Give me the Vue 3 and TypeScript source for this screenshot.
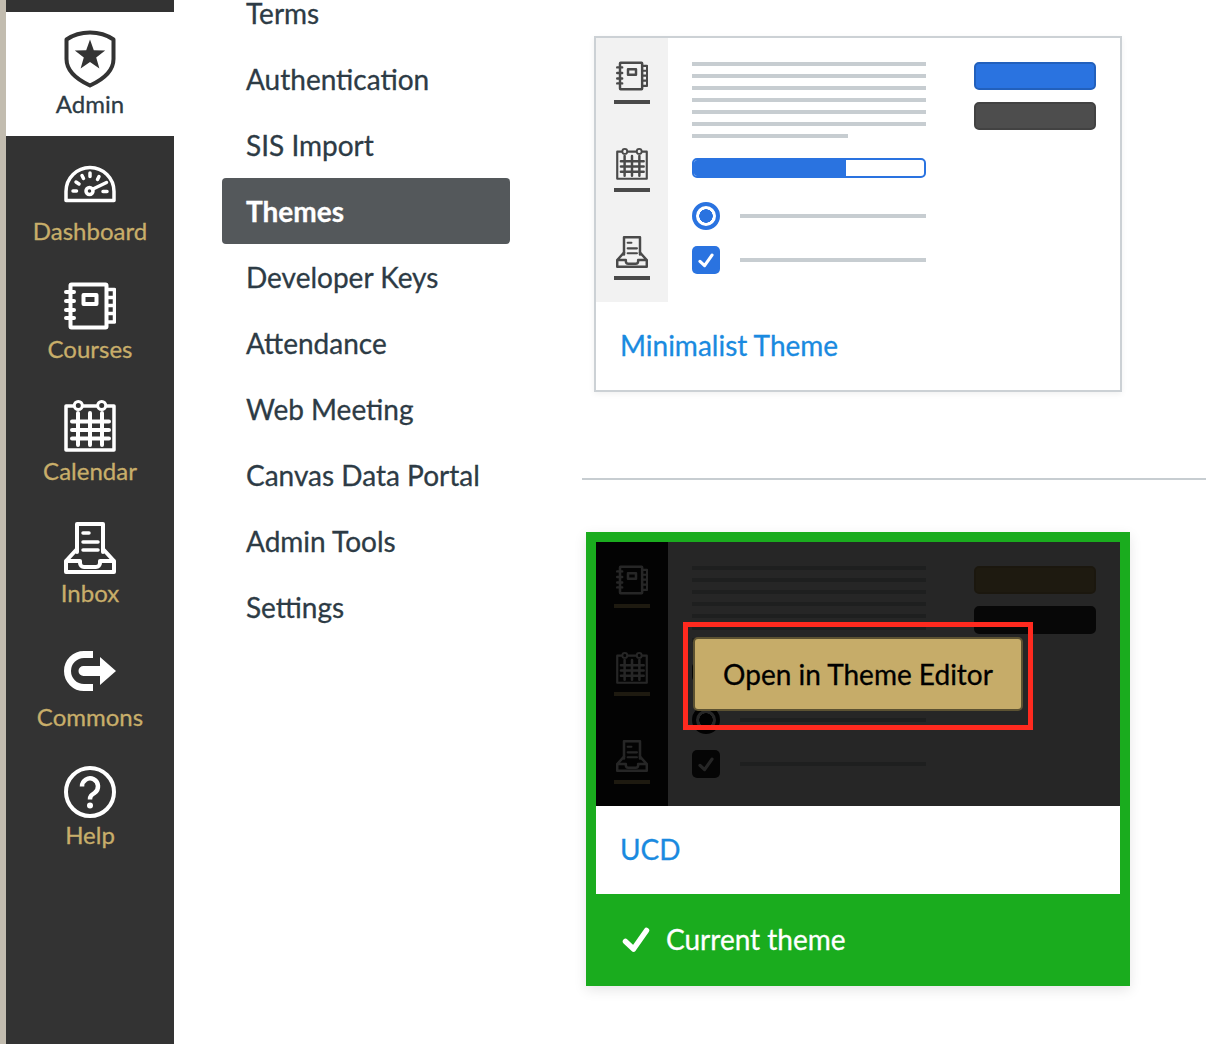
<script setup lang="ts">
interface NavItem {
  key: string
  label: string
}

interface Theme {
  name: string
  variant: 'minimal' | 'ucd'
  current: boolean
}

const navItems: NavItem[] = [
  { key: 'dashboard', label: 'Dashboard' },
  { key: 'courses', label: 'Courses' },
  { key: 'calendar', label: 'Calendar' },
  { key: 'inbox', label: 'Inbox' },
  { key: 'commons', label: 'Commons' },
  { key: 'help', label: 'Help' },
]

const menuItems = [
  'Terms',
  'Authentication',
  'SIS Import',
  'Themes',
  'Developer Keys',
  'Attendance',
  'Web Meeting',
  'Canvas Data Portal',
  'Admin Tools',
  'Settings',
]

const themes: Theme[] = [
  { name: 'Minimalist Theme', variant: 'minimal', current: false },
  { name: 'UCD', variant: 'ucd', current: true },
]

const previewIcons = ['courses', 'calendar', 'inbox']
</script>

<template>
  <svg class="sprite" aria-hidden="true">
    <defs>
      <symbol id="icon-dashboard" viewBox="0 0 52 52">
        <g fill="none" stroke="currentColor" stroke-linecap="round" stroke-linejoin="round">
          <path stroke-width="3.5" d="M2 41.5V32.5A24 24 0 0 1 50 32.5V41.5Z" />
          <circle cx="25.5" cy="32" r="3.5" stroke-width="3.5" />
          <path stroke-width="3.5" d="M29 30L42.5 23.5" />
          <path stroke-width="3.5" d="M9 32H12.5M39 32.500H43M12 23L15 25M18 16.5L19.500 19.500M26 14V17.500M35 17.500L33.500 20.500" />
        </g>
      </symbol>
      <symbol id="icon-courses" viewBox="0 0 52 52">
        <g fill="none" stroke="currentColor" stroke-linecap="round" stroke-linejoin="round">
          <rect x="6.5" y="4.5" width="36" height="43" rx="1" stroke-width="4" />
          <rect x="19.5" y="15" width="13" height="9" stroke-width="4" />
          <path stroke-width="4" d="M2 12H10M2 21H10M2 30H10M2 38H10" />
          <path stroke-width="3.5" d="M43 9.500H50.500V42H43M43 17.500H50.500M43 25.500H50.500M43 33.500H50.500" />
        </g>
      </symbol>
      <symbol id="icon-calendar" viewBox="0 0 52 52">
        <g fill="none" stroke="currentColor" stroke-linecap="round" stroke-linejoin="round">
          <path stroke-width="3.5" d="M9.500 6H2V50H50V6H42.500M19 6H33" />
          <circle cx="14.300" cy="5.500" r="4" stroke-width="3" />
          <circle cx="37.700" cy="5.500" r="4" stroke-width="3" />
          <path stroke-width="4" d="M8 21.500H45M8 30H45M8 38.500H45M14 13V45M26 13V45M38 13V45" />
        </g>
      </symbol>
      <symbol id="icon-inbox" viewBox="0 0 52 52">
        <g fill="none" stroke="currentColor" stroke-linecap="round" stroke-linejoin="round">
          <path stroke-width="4" d="M13 30V2H39V30" />
          <path stroke-width="3.500" d="M19 11H25M19 20H34M19 28H34" />
          <path stroke-width="4" d="M13 27L2 39V50H50V39L39 27M2 39H16V41A4 4 0 0 0 20 45H32A4 4 0 0 0 36 41V39H50" />
        </g>
      </symbol>
      <symbol id="icon-commons" viewBox="0 0 52 52">
        <path fill="none" stroke="currentColor" stroke-width="7" d="M29 9.500H20A16.500 16.500 0 0 0 20 42.500H29" />
        <path fill="currentColor" d="M36 12L52 26L36 40V31H19.500A5 5 0 0 1 19.500 21H36Z" />
      </symbol>
      <symbol id="icon-help" viewBox="0 0 52 52">
        <circle cx="26" cy="26" r="24" fill="none" stroke="currentColor" stroke-width="4" />
        <path fill="none" stroke="currentColor" stroke-width="4.500" d="M18 20.500A8 8 0 1 1 30.500 27C27.500 29 26 30 26 33.500" />
        <circle cx="26" cy="39.500" r="3" fill="currentColor" />
      </symbol>
      <symbol id="icon-check" viewBox="0 0 28 26">
        <path fill="none" stroke="currentColor" stroke-width="5.500" stroke-linecap="round" stroke-linejoin="round" d="M3.500 14.500L11.500 22L24.500 3.500" />
      </symbol>
    </defs>
  </svg>

  <div class="page">
    <div class="edge"></div>

    <nav class="nav">
      <a class="admin-item">
        <svg class="admin-icon" viewBox="0 0 52 58">
          <path fill="none" stroke="currentColor" stroke-width="4" stroke-linejoin="round" d="M2.500 9.500C9 5 17 2.500 26 2.500S43 5 49.500 9.500V29C49.500 41 38 50 26 55.500C14 50 2.500 41 2.500 29Z" />
          <polygon fill="currentColor" points="26,9.500 29.800,20.200 41.200,20.600 32.200,27.500 35.400,38.400 26,32 16.600,38.400 19.800,27.500 10.800,20.600 22.200,20.200" />
        </svg>
        <span class="admin-label">Admin</span>
      </a>
      <a v-for="item in navItems" :key="item.key" class="nav-item" :class="`nav-${item.key}`">
        <svg class="nav-icon"><use :href="`#icon-${item.key}`" /></svg>
        <span class="nav-label">{{ item.label }}</span>
      </a>
    </nav>

    <ul class="menu">
      <li v-for="item in menuItems" :key="item" class="menu-item" :class="{ active: item === 'Themes' }">
        {{ item }}
      </li>
    </ul>

    <main class="content">
      <template v-for="(theme, index) in themes" :key="theme.name">
        <hr v-if="index > 0" class="divider" />
        <section class="card" :class="[`card-${theme.variant}`, { current: theme.current }]">
          <div class="preview">
            <div class="preview-side">
              <div v-for="icon in previewIcons" :key="icon" class="preview-link">
                <svg class="preview-icon"><use :href="`#icon-${icon}`" /></svg>
                <span class="preview-bar"></span>
              </div>
            </div>
            <div class="preview-main">
              <div class="preview-body">
                <div class="text-lines">
                  <span v-for="n in 7" :key="n" class="line" :class="{ short: n === 7 }"></span>
                </div>
                <div class="progress"><span class="progress-fill"></span></div>
                <div class="option">
                  <span class="radio"></span>
                  <span class="line"></span>
                </div>
                <div class="option">
                  <span class="checkbox">
                    <svg viewBox="0 0 28 26"><use href="#icon-check" /></svg>
                  </span>
                  <span class="line"></span>
                </div>
              </div>
              <div class="preview-buttons">
                <span class="fake-btn primary"></span>
                <span class="fake-btn secondary"></span>
              </div>
            </div>
            <div v-if="theme.current" class="overlay">
              <div class="open-wrap">
                <button class="open-btn" type="button">Open in Theme Editor</button>
                <span class="highlight"></span>
              </div>
            </div>
          </div>
          <div class="caption">{{ theme.name }}</div>
          <div v-if="theme.current" class="current-row">
            <svg class="current-check" viewBox="0 0 28 26"><use href="#icon-check" /></svg>
            <span class="current-text">Current theme</span>
          </div>
        </section>
      </template>
    </main>
  </div>
</template>

<style>
html,
body {
  margin: 0;
  background: #fff;
  overflow: hidden;
}
</style>

<style scoped>
.sprite {
  position: absolute;
  width: 0;
  height: 0;
}

.page {
  display: flex;
  width: 1206px;
  height: 1044px;
  overflow: hidden;
  font-family: Lato, "Open Sans", sans-serif;
  -webkit-text-stroke: 0.3px currentColor;
  background: #fff;
}

.edge {
  flex: 0 0 6px;
  background: #c2bcaf;
}

.nav {
  flex: 0 0 168px;
  display: flex;
  flex-direction: column;
  align-items: stretch;
  padding-top: 12px;
  box-sizing: border-box;
  background: #333;
}

.admin-item {
  height: 124px;
  box-sizing: border-box;
  padding-top: 18px;
  display: flex;
  flex-direction: column;
  align-items: center;
  background: #fff;
  color: #333;
}

.admin-icon {
  width: 52px;
  height: 58px;
}

.admin-label {
  margin-top: 3px;
  font-size: 24px;
  line-height: 26px;
  padding-bottom: 2px;
  color: #2d3b45;
}

.nav-item {
  display: flex;
  flex-direction: column;
  align-items: center;
  padding-top: 36px;
  color: #fff;
}

.nav-icon {
  width: 52px;
  height: 52px;
}

.nav-label {
  margin-top: 6px;
  font-size: 24px;
  line-height: 26px;
  padding-bottom: 2px;
  color: #c8ae6a;
}

.nav-dashboard {
  padding-top: 23px;
}

.nav-dashboard .nav-label,
.nav-commons .nav-label {
  margin-top: 7px;
}

.nav-courses {
  padding-top: 34px;
}

.nav-courses .nav-label,
.nav-help .nav-label {
  margin-top: 4px;
}

.nav-commons {
  padding-top: 37px;
}

.nav-help {
  padding-top: 34px;
}

.menu {
  flex: 0 0 288px;
  list-style: none;
  margin: -20px 0 0 48px;
  padding: 0;
}

.menu-item {
  height: 66px;
  box-sizing: border-box;
  padding-left: 24px;
  display: flex;
  align-items: center;
  font-size: 28px;
  color: #2d3b45;
}

.menu-item.active {
  font-weight: 700;
  color: #fff;
  background: #54585b;
  border-radius: 4px;
}

.content {
  flex: 1;
  padding-left: 72px;
}

.divider {
  height: 2px;
  margin: 86px 0 52px;
  border: 0;
  background: #c7cdd1;
}

.card {
  box-sizing: border-box;
  width: 528px;
  margin: 36px 0 0 12px;
  border: 2px solid #ccd1d5;
  background: #fff;
  box-shadow: 0 2px 6px rgba(0, 0, 0, 0.06);
}

.card.current {
  width: 544px;
  margin: 0 0 0 4px;
  border: 10px solid #1aac1e;
  border-bottom: 0;
  box-shadow: 0 4px 12px rgba(0, 0, 0, 0.1);
}

.preview {
  position: relative;
  display: flex;
  height: 264px;
}

.preview-side {
  flex: 0 0 72px;
  padding-top: 22px;
  box-sizing: border-box;
  display: flex;
  flex-direction: column;
  align-items: center;
  gap: 44px;
  color: #4a4a4a;
  background: #f2f2f2;
}

.card-ucd .preview-side {
  color: #fff;
  background: #1a1a1a;
}

.preview-link {
  display: flex;
  flex-direction: column;
  align-items: center;
  gap: 8px;
}

.preview-icon {
  width: 32px;
  height: 32px;
}

.preview-bar {
  width: 36px;
  height: 4px;
  background: #4a4a4a;
}

.card-ucd .preview-bar {
  background: #c8ae6a;
}

.preview-main {
  flex: 1;
  display: flex;
  gap: 48px;
  padding: 24px 0 0 24px;
}

.preview-body {
  width: 234px;
}

.text-lines {
  display: flex;
  flex-direction: column;
  gap: 8px;
}

.line {
  display: block;
  height: 4px;
  background: #c7cdd1;
}

.line.short {
  width: 156px;
}

.progress {
  box-sizing: border-box;
  height: 20px;
  margin-top: 20px;
  border: 2px solid #2a73e0;
  border-radius: 5px;
  overflow: hidden;
}

.progress-fill {
  display: block;
  width: 152px;
  height: 100%;
  background: #2a73e0;
}

.card-ucd .progress {
  border-color: #222;
}

.card-ucd .progress-fill {
  background: #222;
}

.option {
  display: flex;
  align-items: center;
  gap: 20px;
  margin-top: 16px;
}

.progress + .option {
  margin-top: 24px;
}

.option .line {
  flex: 1;
}

.radio {
  box-sizing: border-box;
  width: 28px;
  height: 28px;
  border: 4px solid #2a73e0;
  border-radius: 50%;
  background: radial-gradient(circle, #2a73e0 0 6.500px, #fff 7px);
}

.card-ucd .radio {
  border-color: #111;
  background: radial-gradient(circle, #111 0 6.500px, #fff 7px);
}

.checkbox {
  width: 28px;
  height: 28px;
  border-radius: 5px;
  background: #2a73e0;
  display: flex;
  align-items: center;
  justify-content: center;
  color: #fff;
}

.checkbox svg {
  width: 16px;
  height: 15px;
}

.card-ucd .checkbox {
  background: #222;
}

.preview-buttons {
  display: flex;
  flex-direction: column;
  gap: 12px;
}

.fake-btn {
  box-sizing: border-box;
  width: 122px;
  height: 28px;
  border-radius: 5px;
  border: 2px solid;
}

.primary {
  background: #2a73e0;
  border-color: #2260bc;
}

.secondary {
  background: #4d4d4d;
  border-color: #424242;
}

.card-ucd .primary {
  background: #c8ae6a;
  border-color: #b39a5c;
}

.card-ucd .secondary {
  background: #333;
  border-color: #333;
}

.overlay {
  position: absolute;
  inset: 0;
  display: flex;
  align-items: center;
  justify-content: center;
  background: rgba(0, 0, 0, 0.85);
}

.open-wrap {
  position: relative;
  display: flex;
}

.open-btn {
  width: 330px;
  height: 74px;
  padding: 0;
  border: 2px solid #5c5232;
  border-radius: 5px;
  background: #c6ac69;
  font-family: inherit;
  font-size: 28px;
  color: #000;
  -webkit-text-stroke: 0.3px #000;
}

.highlight {
  position: absolute;
  top: -15px;
  right: -10px;
  bottom: -19px;
  left: -10px;
  border: 5px solid #ff2a1f;
}

.caption {
  height: 88px;
  box-sizing: border-box;
  padding: 0 0 2px 24px;
  display: flex;
  align-items: center;
  font-size: 28px;
  color: #1a8ae0;
  background: #fff;
}

.current-row {
  height: 92px;
  margin: 0 -10px;
  padding-left: 36px;
  box-sizing: border-box;
  display: flex;
  align-items: center;
  gap: 16px;
  font-size: 28px;
  color: #fff;
  background: #1aac1e;
}

.current-text {
  padding-bottom: 2px;
}

.current-check {
  width: 28px;
  height: 26px;
}
</style>
